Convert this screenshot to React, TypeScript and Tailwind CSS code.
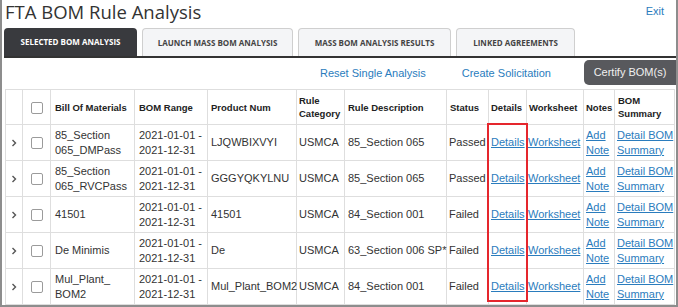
import React from "react";

type Row = {
  bom: React.ReactNode;
  product: string;
  desc: string;
  status: string;
};

const rows: Row[] = [
  { bom: "85_Section 065_DMPass", product: "LJQWBIXVYI", desc: "85_Section 065", status: "Passed" },
  { bom: "85_Section 065_RVCPass", product: "GGGYQKYLNU", desc: "85_Section 065", status: "Passed" },
  { bom: "41501", product: "41501", desc: "84_Section 001", status: "Failed" },
  { bom: "De Minimis", product: "De", desc: "63_Section 006 SP*", status: "Failed" },
  {
    bom: (
      <>
        Mul_Plant_<wbr />BOM2
      </>
    ),
    product: "Mul_Plant_BOM2",
    desc: "84_Section 001",
    status: "Failed",
  },
];

const tabs = ["SELECTED BOM ANALYSIS", "LAUNCH MASS BOM ANALYSIS", "MASS BOM ANALYSIS RESULTS", "LINKED AGREEMENTS"];
const tabWidths = ["w-[133px]", "w-[151px]", "w-[153px]", "w-[119px]"];

const Checkbox = () => (
  <span className="inline-block w-[12px] h-[12px] border border-[#9b9b9b] rounded-[2px] bg-white align-middle" />
);

const Chevron = () => (
  <svg width="6" height="8" viewBox="0 0 6 8" className="inline-block">
    <path d="M1.5 1 L4.5 4 L1.5 7" fill="none" stroke="#555" strokeWidth="1.4" />
  </svg>
);

const link = "text-[#2a7cbd] underline underline-offset-[1px]";
const cell = "border border-[#dedede]";

export default function App() {
  return (
    <div className="w-[678px] h-[307px] overflow-hidden bg-white border-x-2 border-b-2 border-[#8d8d8d] text-[#333] font-['Liberation_Sans',Arial,sans-serif]">
      <div className="flex items-start justify-between h-[28px]">
        <h1 className="pl-[3px] text-[18.5px] leading-[24px] font-['Open_Sans',sans-serif] text-[#333]">
          FTA BOM Rule Analysis
        </h1>
        <a className="mt-[3px] mr-[12px] text-[11px] text-[#2a7cbd]">Exit</a>
      </div>

      <div className="flex gap-[5px] pl-[2px]">
        {tabs.map((t, i) => (
          <div
            key={t}
            className={`${tabWidths[i]} h-[28px] flex items-center justify-center rounded-t-[4px] text-[8px] font-bold font-['Open_Sans',sans-serif] ${
              i === 0 ? "bg-[#393a3e] text-white" : "bg-[#f4f5f7] text-[#444] border border-b-0 border-[#cfcfcf]"
            }`}
          >
            {t}
          </div>
        ))}
      </div>
      <div className="h-[2px] bg-[#333] ml-[2px]" />

      <div className="flex items-start justify-end h-[31px]">
        <a className="mt-[7px] text-[11px] text-[#2a7cbd]">Reset Single Analysis</a>
        <a className="mt-[7px] ml-[36px] text-[11px] text-[#2a7cbd]">Create Solicitation</a>
        <button className="mt-[2px] ml-[33px] w-[92px] h-[25px] rounded-l-[5px] bg-[#58595d] text-[#f0f0f0] text-[11px]">
          Certify BOM(s)
        </button>
      </div>

      <div className="relative ml-[3px]">
        <table className="table-fixed border-collapse w-[669px] text-[11px] leading-[15px]">
          <colgroup>
            <col className="w-[17px]" />
            <col className="w-[28px]" />
            <col className="w-[84px]" />
            <col className="w-[73px]" />
            <col className="w-[89px]" />
            <col className="w-[48px]" />
            <col className="w-[102px]" />
            <col className="w-[42px]" />
            <col className="w-[38px]" />
            <col className="w-[57px]" />
            <col className="w-[31px]" />
            <col className="w-[60px]" />
          </colgroup>
          <thead>
            <tr className="h-[35px] text-[9.5px] leading-[13px] font-bold text-[#222] text-left">
              <th className={cell} />
              <th className={`${cell} text-center`}>
                <Checkbox />
              </th>
              <th className={`${cell} px-[4px] whitespace-nowrap`}>Bill Of Materials</th>
              <th className={`${cell} px-[4px]`}>BOM Range</th>
              <th className={`${cell} px-[3px]`}>Product Num</th>
              <th className={`${cell} px-[2px]`}>Rule Category</th>
              <th className={`${cell} px-[3px]`}>Rule Description</th>
              <th className={`${cell} px-[3px]`}>Status</th>
              <th className={`${cell} px-[2px]`}>Details</th>
              <th className={`${cell} px-[2px]`}>Worksheet</th>
              <th className={`${cell} px-[2px]`}>Notes</th>
              <th className={`${cell} px-[3px]`}>BOM Summary</th>
            </tr>
          </thead>
          <tbody>
            {rows.map((r, i) => (
              <tr key={i} className="h-[36px]">
                <td className={`${cell} text-center`}>
                  <Chevron />
                </td>
                <td className={`${cell} text-center`}>
                  <Checkbox />
                </td>
                <td className={`${cell} px-[4px]`}>{r.bom}</td>
                <td className={`${cell} px-[4px] whitespace-nowrap`}>
                  2021-01-01 -<br />
                  2021-12-31
                </td>
                <td className={`${cell} px-[3px] whitespace-nowrap`}>{r.product}</td>
                <td className={`${cell} px-[2px]`}>USMCA</td>
                <td className={`${cell} px-[3px] whitespace-nowrap`}>{r.desc}</td>
                <td className={`${cell} px-[2px]`}>{r.status}</td>
                <td className={`${cell} px-[2px]`}>
                  <a className={link}>Details</a>
                </td>
                <td className={`${cell} px-[1px]`}>
                  <a className={link}>Worksheet</a>
                </td>
                <td className={`${cell} px-[2px]`}>
                  <a className={link}>
                    Add
                    <br />
                    Note
                  </a>
                </td>
                <td className={`${cell} px-[2px] whitespace-nowrap`}>
                  <a className={link}>
                    Detail BOM
                    <br />
                    Summary
                  </a>
                </td>
              </tr>
            ))}
          </tbody>
        </table>
        <div className="absolute left-[482px] top-[34px] w-[41px] h-[179px] border-2 border-[#e5262d]" />
      </div>
    </div>
  );
}
